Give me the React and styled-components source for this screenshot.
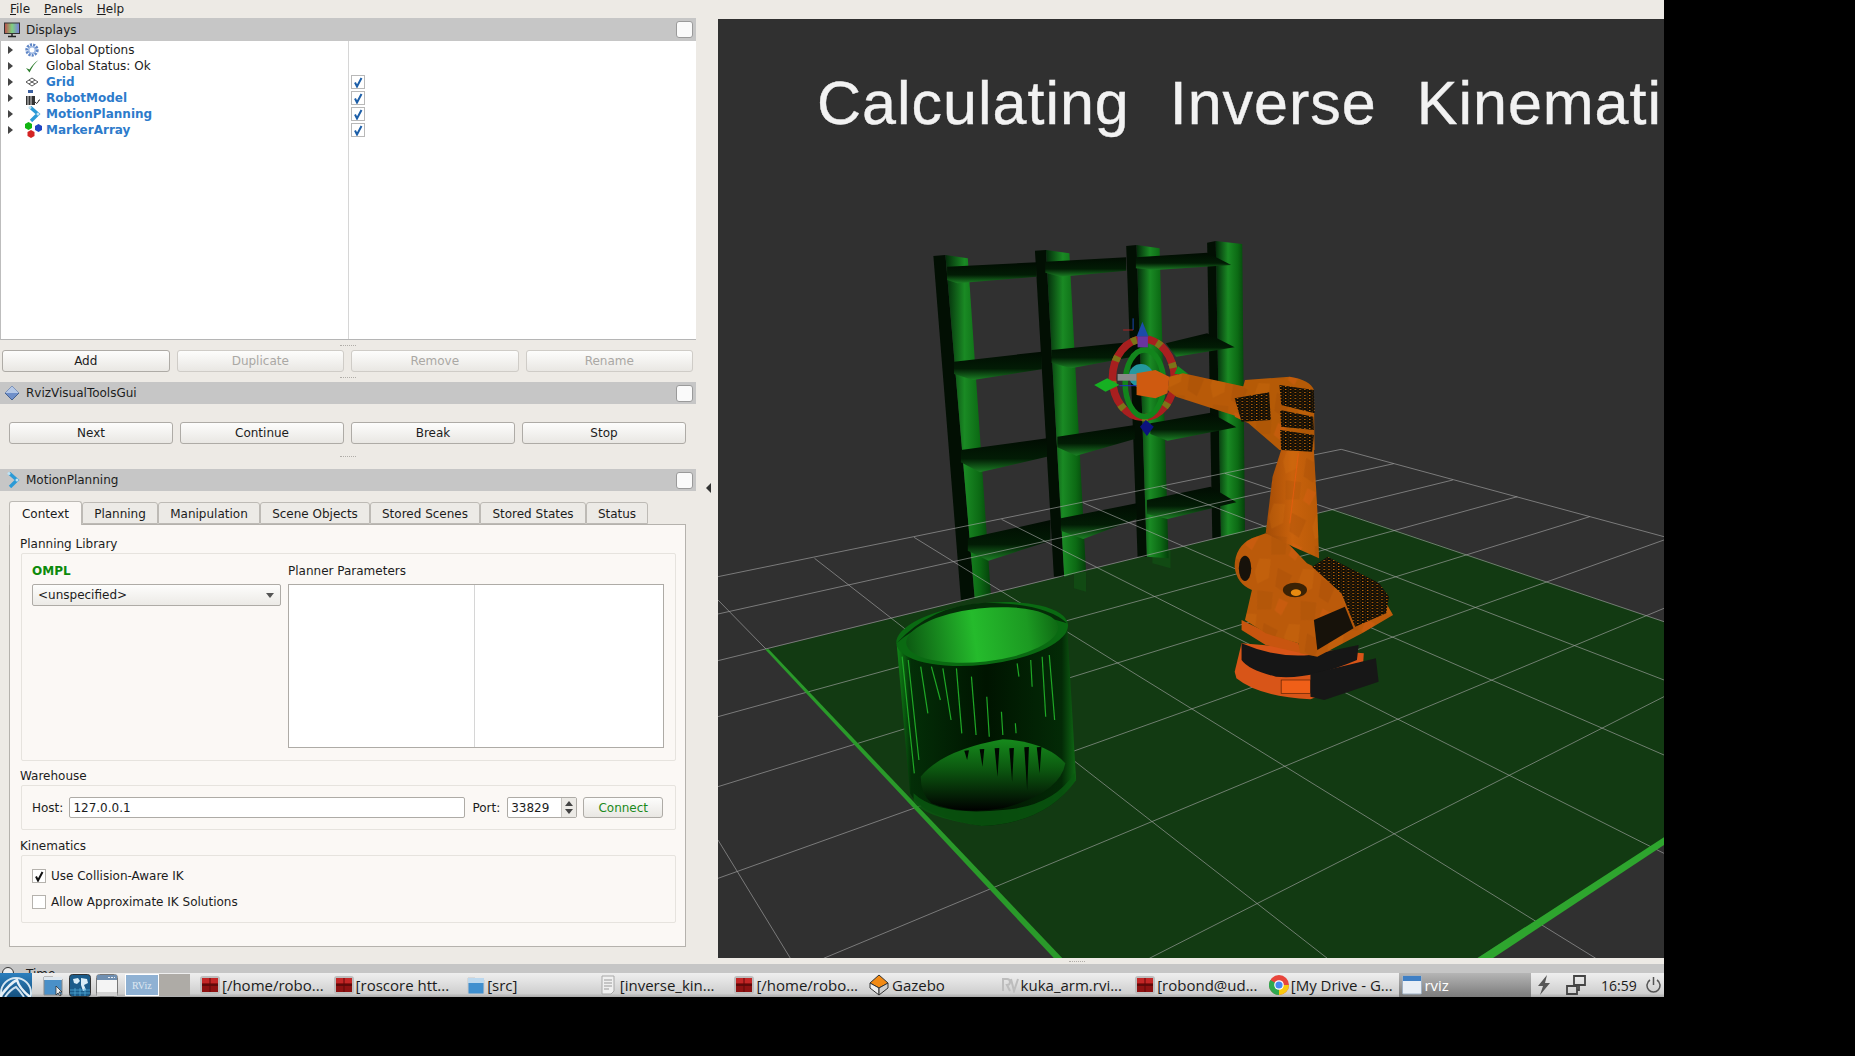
import styled, { createGlobalStyle } from "styled-components";

const Global = createGlobalStyle`
  html, body { margin: 0; padding: 0; background: #000; }
  body { font-family: "DejaVu Sans", sans-serif; font-size: 12px; color: #1c1c1c; overflow: hidden; }
`;

const Screen = styled.div`
  width: 1664px;
  height: 997px;
  display: flex;
  flex-direction: column;
  background: #edeae5;
  overflow: hidden;
`;

const MenuBar = styled.div`
  height: 18px;
  box-sizing: border-box;
  display: flex;
  align-items: center;
  padding: 0 0 1px 10px;
  gap: 14px;
  flex: none;
`;

const Main = styled.div`
  height: 940px;
  flex: none;
  display: flex;
`;

const Dock = styled.div`
  width: 696px;
  flex: none;
  display: flex;
  flex-direction: column;
`;

const Header = styled.div`
  height: ${(p) => p.h || 22}px;
  flex: none;
  background: #c6c6c6;
  display: flex;
  align-items: center;
  gap: 6px;
  padding: 0 3px 0 4px;
`;

const HeaderText = styled.span`
  flex: 1;
`;

const FloatBox = styled.span`
  width: 15px;
  height: 15px;
  border: 1px solid #9a9a9a;
  border-radius: 3px;
  background: #fafafa;
`;

const Tree = styled.div`
  height: 299px;
  flex: none;
  background: #fff;
  border-left: 1px solid #bdbdbd;
  border-bottom: 1px solid #b5b5b5;
  box-sizing: border-box;
  display: flex;
`;

const TreeNames = styled.div`
  width: 347px;
  padding-top: 1px;
  border-right: 1px solid #d6d6d6;
`;

const TreeRow = styled.div`
  height: 16px;
  display: flex;
  align-items: center;
  color: ${(p) => (p.$on ? "#2d7bcb" : "#1c1c1c")};
  font-weight: ${(p) => (p.$on ? 700 : 400)};
`;

const Arrow = styled.i`
  width: 0;
  height: 0;
  margin: 0 12px 0 7px;
  border-left: 5px solid #444;
  border-top: 4px solid transparent;
  border-bottom: 4px solid transparent;
`;

const TreeIcon = styled.span`
  width: 21px;
  height: 16px;
  display: flex;
  align-items: center;
  justify-content: flex-start;
`;

const TreeChecks = styled.div`
  padding: 33px 0 0 2px;
`;

const CheckCell = styled.div`
  height: 16px;
  display: flex;
  align-items: center;
`;

const BlueBox = styled.span`
  width: 12px;
  height: 12px;
  border: 1px solid #b8b8b8;
  background: #fff;
  display: flex;
  align-items: center;
  justify-content: center;
`;

const Dots = styled.div`
  height: ${(p) => p.h}px;
  flex: none;
  display: flex;
  align-items: center;
  justify-content: center;
  &::after {
    content: "";
    width: 16px;
    border-top: 1px dotted #b0ada8;
  }
`;

const ButtonRow = styled.div`
  display: flex;
  flex: none;
  gap: ${(p) => p.gap}px;
  padding: ${(p) => p.pad};
`;

const Btn = styled.div`
  flex: 1;
  height: 22px;
  box-sizing: border-box;
  display: flex;
  align-items: center;
  justify-content: center;
  border: 1px solid ${(p) => (p.$off ? "#cfccc7" : "#aeaba6")};
  border-radius: 3px;
  background: linear-gradient(#fdfdfc, #e9e7e3);
  color: ${(p) => (p.$off ? "#aaa8a4" : "#1c1c1c")};
`;

const TabRow = styled.div`
  height: 22px;
  flex: none;
  margin: 11px 0 0 9px;
  display: flex;
  align-items: flex-end;
  position: relative;
  z-index: 1;
`;

const Tab = styled.div`
  width: ${(p) => p.w}px;
  height: ${(p) => (p.$active ? 24 : 22)}px;
  margin-bottom: ${(p) => (p.$active ? -1 : 0)}px;
  padding-top: 1px;
  box-sizing: border-box;
  display: flex;
  align-items: center;
  justify-content: center;
  border: 1px solid #bdbab5;
  border-bottom: ${(p) => (p.$active ? "none" : "1px solid #bdbab5")};
  border-radius: 3px 3px 0 0;
  background: ${(p) => (p.$active ? "#fbf8f5" : "#eceae6")};
`;

const Pane = styled.div`
  height: 423px;
  width: 677px;
  flex: none;
  margin-left: 9px;
  box-sizing: border-box;
  background: #fbf8f5;
  border: 1px solid #b5b2ad;
  padding: 0 9px 0 10px;
`;

const GroupTitle = styled.div`
  height: ${(p) => p.h}px;
  box-sizing: border-box;
  display: flex;
  align-items: flex-end;
  padding-bottom: 2px;
`;

const GroupBox = styled.div`
  height: ${(p) => p.h}px;
  margin-left: 1px;
  box-sizing: border-box;
  border: 1px solid #e6e3de;
  border-radius: 2px;
  padding: ${(p) => p.pad};
`;

const LibraryGrid = styled.div`
  display: grid;
  grid-template-columns: 249px 376px;
  column-gap: 7px;
`;

const Green = styled.div`
  height: 27px;
  display: flex;
  align-items: center;
  color: #0c8a0c;
  font-weight: 700;
`;

const Plain = styled.div`
  height: 27px;
  display: flex;
  align-items: center;
`;

const Combo = styled.div`
  height: 22px;
  box-sizing: border-box;
  border: 1px solid #aeaba6;
  border-radius: 2px;
  background: linear-gradient(#fdfdfc, #eceae6);
  display: flex;
  align-items: center;
  justify-content: space-between;
  padding: 0 6px 0 5px;
  &::after {
    content: "";
    border-top: 5px solid #555;
    border-left: 4px solid transparent;
    border-right: 4px solid transparent;
  }
`;

const ParamTable = styled.div`
  height: 164px;
  box-sizing: border-box;
  border: 1px solid #aeaba6;
  background: #fff;
  display: grid;
  grid-template-columns: 186px 1fr;
  & > div:first-child { border-right: 1px solid #d6d6d6; }
`;

const FormRow = styled.div`
  display: flex;
  align-items: center;
  height: 21px;
`;

const PortLabel = styled.span`
  margin: 0 7px;
`;

const Field = styled.div`
  height: 21px;
  width: ${(p) => p.w}px;
  margin-left: ${(p) => p.$ml || 0}px;
  box-sizing: border-box;
  border: 1px solid #aeaba6;
  border-radius: 2px;
  background: #fff;
  display: flex;
  align-items: center;
  padding-left: 3px;
`;

const Spin = styled.div`
  width: 14px;
  height: 19px;
  margin-left: auto;
  border-left: 1px solid #c8c5c0;
  background: #eceae6;
  display: flex;
  flex-direction: column;
  align-items: center;
  justify-content: space-evenly;
`;

const SpinUp = styled.i`
  border-bottom: 5px solid #444;
  border-left: 4px solid transparent;
  border-right: 4px solid transparent;
`;

const SpinDown = styled.i`
  border-top: 5px solid #444;
  border-left: 4px solid transparent;
  border-right: 4px solid transparent;
`;

const ConnectBtn = styled(Btn)`
  flex: none;
  width: 80px;
  height: 21px;
  margin-left: 6px;
  color: #1b8a1b;
`;

const CheckLine = styled.div`
  display: flex;
  align-items: center;
  gap: 5px;
  height: 14px;
  margin-bottom: 12px;
`;

const Tick = styled.span`
  width: 12px;
  height: 12px;
  border: 1px solid #b5b2ad;
  background: #fff;
  display: flex;
  align-items: center;
  justify-content: center;
`;

const Gutter = styled.div`
  width: 22px;
  flex: none;
  display: flex;
  align-items: center;
  padding-left: 10px;
  box-sizing: border-box;
  &::after {
    content: "";
    border-right: 5px solid #333;
    border-top: 5px solid transparent;
    border-bottom: 5px solid transparent;
  }
`;

const Viewport = styled.div`
  width: 946px;
  height: 939px;
  margin-top: 1px;
  flex: none;
  position: relative;
  overflow: hidden;
  background: #303030;
  svg { display: block; margin-top: -1px; }
`;

const Caption = styled.div`
  position: absolute;
  left: 99px;
  top: 49px;
  white-space: nowrap;
  font-family: "Liberation Sans", Arial, sans-serif;
  font-size: 61px;
  line-height: 70px;
  letter-spacing: 1px;
  word-spacing: 22px;
  color: #f2f2f2;
  -webkit-text-stroke: 0.4px #f2f2f2;
  filter: blur(0.6px);
`;

const BottomDots = styled(Dots)`
  padding-left: 490px;
`;

const TimeStrip = styled.div`
  height: 9px;
  box-sizing: border-box;
  flex: none;
  background: #c6c6c6;
  overflow: hidden;
  display: flex;
  gap: 12px;
  padding: 3px 0 0 2px;
  line-height: 14px;
`;

const TimeDial = styled.i`
  width: 10px;
  height: 10px;
  flex: none;
  border: 1px solid #333;
  border-radius: 50%;
  background: #eee;
`;

const Taskbar = styled.div`
  height: 24px;
  flex: none;
  display: flex;
  align-items: stretch;
  background: linear-gradient(#efefef, #cfcfcf 85%, #a9a9a9);
  font-family: "Open Sans", "Noto Sans", sans-serif;
  font-size: 15px;
  color: #1b1b1b;
`;

const StartBtn = styled.div`
  width: 32px;
  flex: none;
  background: linear-gradient(#2c7fbe, #16517f);
  overflow: hidden;
`;

const Launchers = styled.div`
  width: 93px;
  flex: none;
  display: flex;
  align-items: center;
  gap: 5px;
  padding-left: 10px;
  box-sizing: border-box;
`;

const Pager = styled.div`
  width: 65px;
  flex: none;
  display: flex;
  margin: 1px 0;
`;

const Desk = styled.div`
  flex: 1;
  box-sizing: border-box;
  background: ${(p) => (p.$on ? "#8fb1d3" : "#aeaba6")};
  border: ${(p) => (p.$on ? "1px solid #fff" : "none")};
  color: #dfe8f1;
  font-family: "Liberation Serif", serif;
  font-size: 10px;
  display: flex;
  align-items: center;
  justify-content: center;
`;

const Tasks = styled.div`
  width: 1336px;
  margin-left: 7px;
  flex: none;
  display: grid;
  grid-template-columns: repeat(10, 1fr);
`;

const Task = styled.div`
  display: flex;
  align-items: center;
  gap: 2px;
  padding-left: 3px;
  overflow: hidden;
  white-space: nowrap;
  ${(p) =>
    p.$on &&
    `background: linear-gradient(#b5b5b5, #7b7b7b); color: #fff; width: 129px;`}
`;

const Tray = styled.div`
  flex: 1;
  display: flex;
  align-items: center;
  gap: 14px;
  font-size: 14px;
  padding-left: 4px;
`;

const Clock = styled.span`
  margin-right: -5px;
`;

const TickMark = ({ color }) => (
  <svg width="10" height="11" viewBox="0 0 10 11">
    <path d="M2 5.500 4 9.500 8.500 1" fill="none" stroke={color} strokeWidth="2" />
  </svg>
);

const TermIcon = () => (
  <svg width="20" height="18" viewBox="0 0 20 18">
    <rect x="0" y="0" width="20" height="18" rx="3" fill="#bdbdbd" />
    <rect x="2" y="2" width="16" height="14" fill="#8e1111" />
    <rect x="2" y="2" width="16" height="5" fill="#c42626" />
    <rect x="2" y="8.5" width="16" height="1" fill="#330404" />
    <rect x="9.5" y="2" width="1" height="14" fill="#5e0808" />
  </svg>
);

const FolderIcon = () => (
  <svg width="18" height="20" viewBox="0 0 18 20">
    <path d="M1 3h7l2 2h7v14H1z" fill="#3f8fcf" stroke="#c9c9c9" />
    <rect x="1" y="3" width="16" height="5" fill="#bcd8ee" />
  </svg>
);

const DocIcon = () => (
  <svg width="17" height="20" viewBox="0 0 17 20">
    <path d="M1 1h12v15l-3 3H1z" fill="#f0f0f0" stroke="#a8a8a8" />
    <path d="M3 5h8M3 8h8M3 11h8M3 14h5" stroke="#9a9a9a" />
  </svg>
);

const GazeboIcon = () => (
  <svg width="22" height="22" viewBox="0 0 22 22">
    <path d="M11 1 20 9 11 14 2 9z" fill="#f28a14" stroke="#333" />
    <path d="M2 9v5l9 7V14z" fill="#eee" stroke="#333" />
    <path d="M20 9v5l-9 7V14z" fill="#cfcfcf" stroke="#333" />
  </svg>
);

const ChromeIcon = () => (
  <svg width="20" height="20" viewBox="0 0 20 20">
    <circle cx="10" cy="10" r="10" fill="#e8453c" />
    <path d="M10 10 1.300 5A10 10 0 0 0 10 20z" fill="#2fa84f" />
    <path d="M10 10h10A10 10 0 0 1 10 20z" fill="#f9c80e" />
    <circle cx="10" cy="10" r="4.800" fill="#fff" />
    <circle cx="10" cy="10" r="3.600" fill="#4688f1" />
  </svg>
);

const RvizMark = () => (
  <svg width="17" height="16" viewBox="0 0 17 16">
    <path d="M1 14V2h4q3 0 3 3t-3 3l3 6M9 2l3 12 4-12" fill="none" stroke="#bdbdbd" strokeWidth="2" />
  </svg>
);

const WinIcon = () => (
  <svg width="20" height="20" viewBox="0 0 20 20">
    <rect x="0.5" y="1" width="19" height="18" rx="1" fill="#e8eef5" stroke="#9fb0c2" />
    <rect x="1" y="1" width="18" height="5" fill="#3f7fc4" />
  </svg>
);

const Lubuntu = () => (
  <svg width="32" height="24" viewBox="0 0 32 24">
    <circle cx="16" cy="20" r="15" fill="none" stroke="#d7e7f2" strokeWidth="2" />
    <path d="M0 24Q10 10 17 7q2 8 13 17" fill="none" stroke="#e6f0f7" strokeWidth="2.500" />
    <path d="M5 24q6-8 11-10 4 4 8 10" fill="none" stroke="#cfe1ee" strokeWidth="2" />
  </svg>
);

const Launcher1 = () => (
  <svg width="22" height="23" viewBox="0 0 22 23">
    <path d="M2 3h9l2 2h7v16H2z" fill="#4a90c8" stroke="#888" />
    <rect x="2" y="3" width="18" height="3" fill="#dfe7ee" />
    <path d="M14 12v9l2-2 2 3 1-1-2-3h3z" fill="#eee" stroke="#222" strokeWidth="0.7" />
  </svg>
);

const Launcher2 = () => (
  <svg width="22" height="23" viewBox="0 0 22 23">
    <rect x="0.5" y="0.5" width="21" height="22" rx="3" fill="#1b5c8b" stroke="#333" />
    <path d="M4 5l5-1 2 3-3 3-3-1zM12 4l6 1 1 4-4 2 2 5-3 1-2-6z" fill="#d9ecf7" />
    <path d="M1 16h20M1 19h20M6 14v8M11 14v8M16 14v8" stroke="#56b1df" strokeWidth="0.7" />
  </svg>
);

const Launcher3 = () => (
  <svg width="22" height="23" viewBox="0 0 22 23">
    <rect x="0.5" y="0.5" width="21" height="22" rx="3" fill="#f4f4f4" stroke="#777" />
    <rect x="1" y="1" width="20" height="5" fill="#6f8fb1" />
    <path d="M12 3.500h7" stroke="#e8eef5" strokeDasharray="2 1" />
    <rect x="1" y="18" width="20" height="4" fill="#d2d2d2" />
  </svg>
);

const MonitorIcon = () => (
  <svg width="16" height="16" viewBox="0 0 16 16">
    <defs>
      <linearGradient id="mon" x1="0" x2="1" y1="0" y2="0">
        <stop offset="0" stopColor="#c04a4a" />
        <stop offset="0.5" stopColor="#7fd07f" />
        <stop offset="1" stopColor="#7a7ae0" />
      </linearGradient>
    </defs>
    <rect x="0.5" y="1" width="15" height="10.500" fill="url(#mon)" stroke="#333" />
    <path d="M8 12v2M4 14.500h8" stroke="#222" strokeWidth="1.500" />
  </svg>
);

const GearIcon = () => (
  <svg width="14" height="14" viewBox="0 0 14 14">
    <circle cx="7" cy="7" r="5" fill="none" stroke="#5f86c6" strokeWidth="3.400" strokeDasharray="2 1" />
    <circle cx="7" cy="7" r="3.200" fill="none" stroke="#9db8e4" strokeWidth="1.400" />
    <circle cx="7" cy="7" r="1.600" fill="#fff" />
  </svg>
);

const CheckIcon = () => (
  <svg width="14" height="14" viewBox="0 0 14 14">
    <path d="M1 9l3.500 4.500C7 8 10 4 13.500 1 9.500 3.500 6.500 7 4.500 10.500z" fill="#2c7d2c" />
  </svg>
);

const GridIcon = () => (
  <svg width="14" height="10" viewBox="0 0 14 10">
    <path d="M7 1 13 5 7 9 1 5zM4 3l6 4M10 3 4 7" fill="none" stroke="#444" strokeWidth="0.9" />
  </svg>
);

const RobotIcon = () => (
  <svg width="16" height="16" viewBox="0 0 16 16">
    <rect x="3" y="0" width="5" height="3" fill="#3a5fa0" />
    <rect x="1" y="6" width="9" height="9" fill="#333" />
    <path d="M3 6v9M6 6v9" stroke="#ddd" />
    <path d="M10 12q2 3 3 0t2-2" fill="none" stroke="#333" />
  </svg>
);

const MotionIcon = () => (
  <svg width="16" height="16" viewBox="0 0 16 16">
    <path d="M5 1 13 8 6 15" fill="none" stroke="#2b9ad6" strokeWidth="3.400" />
    <circle cx="5" cy="1.500" r="1.500" fill="#bfe3f5" />
    <circle cx="13" cy="8" r="1.500" fill="#bfe3f5" />
  </svg>
);

const CubesIcon = () => (
  <svg width="18" height="16" viewBox="0 0 18 16">
    <path d="M3.500 0 7 2v4L3.500 8 0 6V2z" fill="#11b511" />
    <path d="M13.500 2 17 4v4l-3.500 2L10 8V4z" fill="#1f45c4" />
    <path d="M6 8l3.500 2v4L6 16l-3.500-2v-4z" fill="#d42424" />
  </svg>
);

const DiamondIcon = () => (
  <svg width="16" height="16" viewBox="0 0 16 16">
    <path d="M8 1 15 8 8 15 1 8z" fill="#6f8fc9" stroke="#46618f" />
    <path d="M8 1 15 8H1z" fill="#b5c8e6" />
  </svg>
);

const GRID = [
  [0, 410, 1033, 28], [0, 522, 1120, 71], [0, 662, 1218, 120], [0, 830, 1325, 170],
  [0, 1040, 1445, 230], [0, 1315, 1568, 300], [175, 1555, 1568, 505], [715, 1555, 1568, 770],
  [0, 1200, 120, 1555], [0, 480, 80, 628], [160, 355, 1010, 1555], [325, 292, 1455, 1555],
  [470, 238, 1568, 1240], [605, 188, 1568, 945], [735, 140, 1568, 720], [840, 100, 1568, 545],
  [1033, 28, 1568, 290],
];

const POSTS = [
  ["155,78 190,75 275,1105 235,1110", "190,75 255,85 322,1095 275,1105"],
  ["450,62 482,60 535,1040 505,1040", "482,60 550,70 598,1020 535,1040"],
  ["715,48 745,45 775,980 748,980", "745,45 812,55 838,985 775,980"],
  ["950,38 975,33 990,920 965,925", "975,33 1052,42 1060,905 990,920"],
];

const SHELVES = [
  "195,110 455,97 455,140 225,160 195,150", "480,95 715,82 715,122 525,140 480,128", "743,82 950,68 1020,105 800,120 743,115",
  "215,395 470,365 470,418 270,450 215,432", "498,360 735,335 735,380 555,415 498,398", "830,340 950,310 1030,352 860,380",
  "235,660 485,625 485,680 290,727 235,697", "515,620 740,585 740,627 570,677 515,652", "785,580 960,548 1035,592 835,632 785,612",
  "255,925 495,870 495,932 315,992 255,962", "525,865 745,820 745,867 590,927 525,902", "775,810 960,770 1035,817 835,867 775,852",
];

const STREAKS = [
  [200, 320, 225, 420], [232, 325, 255, 480], [270, 325, 285, 520], [312, 350, 325, 525],
  [355, 410, 362, 530], [396, 455, 400, 525], [435, 490, 437, 520], [478, 300, 482, 380],
  [510, 290, 520, 470], [530, 285, 545, 480], [440, 310, 445, 350], [118, 290, 152, 640],
  [135, 300, 165, 600], [170, 320, 190, 460],
];

const WEDGES = [[292, 572, 600], [335, 568, 620], [377, 565, 650], [418, 565, 665], [460, 562, 690], [495, 562, 640]];

const TURRET = "M1030,1010 Q1030,950 1080,925 L1120,910 Q1160,920 1180,935 L1240,1000 L1260,1010 L1340,1090 L1470,1120 L1490,1155 L1400,1210 L1270,1280 L1220,1270 L1215,1240 L1120,1210 L1060,1170 L1080,1080 Q1035,1060 1030,1010Z";
const UPPER_ARM = "M1120,910 L1140,740 L1165,660 L1260,660 L1270,840 L1275,985 L1200,950Z";
const SHOULDER = "M1060,450 L1190,440 Q1250,450 1260,480 L1262,660 L1160,660 L1070,580 L1030,560Z";
const FOREARM = "M840,440 L880,430 L1060,470 L1040,560 L860,500 L835,480Z";

const Part = ({ d, fill }) => (
  <>
    <path d={d} fill={fill} />
    <path d={d} fill="url(#mottle)" />
  </>
);

const Scene = () => (
  <svg width="946" height="940" viewBox="718 18 946 940">
    <defs>
      <linearGradient id="postFace" x1="0" x2="1" y1="0" y2="0">
        <stop offset="0" stopColor="#03280a" />
        <stop offset="0.42" stopColor="#1a8a24" />
        <stop offset="0.75" stopColor="#0c6a14" />
        <stop offset="1" stopColor="#04400a" />
      </linearGradient>
      <linearGradient id="shelf" x1="0" x2="0" y1="0" y2="1">
        <stop offset="0" stopColor="#010c02" />
        <stop offset="0.6" stopColor="#021c05" />
        <stop offset="1" stopColor="#1b8024" />
      </linearGradient>
      <linearGradient id="mouth" x1="0" x2="1" y1="0" y2="0">
        <stop offset="0" stopColor="#0c5a12" />
        <stop offset="0.45" stopColor="#25bb2c" />
        <stop offset="0.8" stopColor="#1c9a22" />
        <stop offset="1" stopColor="#0f6a14" />
      </linearGradient>
      <linearGradient id="canBody" x1="0" x2="1" y1="0" y2="0">
        <stop offset="0" stopColor="#118a18" />
        <stop offset="0.08" stopColor="#032e07" />
        <stop offset="0.5" stopColor="#001400" />
        <stop offset="0.92" stopColor="#032a06" />
        <stop offset="1" stopColor="#0f6a14" />
      </linearGradient>
      <linearGradient id="canFloor" x1="0" x2="0" y1="0" y2="1">
        <stop offset="0" stopColor="#168a1c" />
        <stop offset="0.4" stopColor="#0c5a10" />
        <stop offset="1" stopColor="#000" />
      </linearGradient>
      <linearGradient id="arm" x1="0" x2="1" y1="0" y2="0">
        <stop offset="0" stopColor="#a34c06" />
        <stop offset="0.5" stopColor="#c9620c" />
        <stop offset="1" stopColor="#b85a08" />
      </linearGradient>
      <pattern id="dither" width="14" height="9" patternUnits="userSpaceOnUse">
        <rect width="14" height="9" fill="#120e06" />
        <rect x="0" y="0" width="4" height="3" fill="#c76a08" />
        <rect x="8" y="5" width="3" height="2" fill="#8a4a05" />
      </pattern>
      <pattern id="mottle" width="130" height="170" patternUnits="userSpaceOnUse" patternTransform="rotate(14)">
        <polygon points="8,10 40,4 48,60 20,84 4,50" fill="#dc7410" opacity="0.22" />
        <polygon points="66,24 112,36 104,92 72,80" fill="#8f4205" opacity="0.2" />
        <polygon points="24,104 70,98 78,150 38,160" fill="#8f4205" opacity="0.16" />
        <polygon points="92,112 120,118 110,160 88,150" fill="#e8601a" opacity="0.28" />
      </pattern>
    </defs>

    <g transform="translate(718 440) scale(0.6033 0.33333)">
      <polygon points="80,628 1020,208 1568,545 1568,1195 1258,1555 565,1555" fill="#123a12" />
      <polygon points="590,400 610,395 610,455 590,445" fill="#0f5a14" opacity="0.5" />
      <polygon points="720,340 750,330 750,385 720,370" fill="#0f5a14" opacity="0.5" />
    </g>

    <g transform="translate(880 230) scale(0.34435 0.33333)">
      {POSTS.map(([dark, face], i) => (
        <g key={i}>
          <polygon points={dark} fill="#020f03" />
          <polygon points={face} fill="url(#postFace)" />
        </g>
      ))}
      {SHELVES.map((s) => (
        <polygon key={s} points={s} fill="url(#shelf)" />
      ))}
    </g>

    <g transform="translate(718 440) scale(0.6033 0.33333)">
      {GRID.map(([x1, y1, x2, y2]) => (
        <line key={`${x1}-${y1}`} x1={x1} y1={y1} x2={x2} y2={y2} stroke="#a8a8a8" strokeOpacity="0.62" strokeWidth="1" vectorEffect="non-scaling-stroke" />
      ))}
      <polygon points="78,628 84,628 571,1555 557,1555" fill="#2a9a2a" />
      <polygon points="1258,1555 1568,1192 1568,1215 1284,1555" fill="#2ea52e" />
    </g>

    <g transform="translate(860 560) scale(0.35714 0.33333)">
      <path d="M103,255 L140,700 Q170,770 340,798 Q520,790 605,660 L580,195 Z" fill="url(#canBody)" />
      <path d="M170,650 Q230,570 400,538 Q520,545 575,610 Q560,700 400,745 Q280,765 200,730 Q170,700 170,650Z" fill="url(#canFloor)" />
      {WEDGES.map(([x, top, bottom]) => (
        <polygon key={x} points={`${x},${top} ${x + 13},${top - 1} ${x + 8},${bottom}`} fill="#010801" />
      ))}
      {STREAKS.map(([x1, y1, x2, y2]) => (
        <line key={`${x1}-${y1}`} x1={x1} y1={y1} x2={x2} y2={y2} stroke="#1fa826" strokeWidth="1.200" vectorEffect="non-scaling-stroke" />
      ))}
      <path d="M150,722 Q170,770 340,798 Q520,790 605,660 L600,640 Q540,740 400,750 Q220,770 150,700Z" fill="#0a5a10" opacity="0.8" />
      <ellipse cx="342" cy="222" rx="242" ry="92" transform="rotate(-7 342 222)" fill="#0a6a12" />
      <path d="M102,250 Q200,135 350,128 Q520,130 580,190 Q500,160 350,150 Q190,165 102,250Z" fill="#052d08" />
      <ellipse cx="342" cy="225" rx="214" ry="80" transform="rotate(-7 342 225)" fill="url(#mouth)" />
    </g>

    <g transform="translate(880 230) scale(0.34435 0.33333)">
      <ellipse cx="765" cy="445" rx="90" ry="118" fill="none" stroke="#a81f1f" strokeWidth="22" />
      <ellipse cx="765" cy="445" rx="90" ry="118" fill="none" stroke="#7c7418" strokeWidth="22" strokeDasharray="16 60" />
      <ellipse cx="768" cy="460" rx="56" ry="100" fill="none" stroke="#12851c" strokeWidth="16" />
      <polygon points="762,275 745,320 780,320" fill="#1c4ba8" />
      <polygon points="748,320 778,320 778,352 748,352" fill="#6a35a0" />
      <polygon points="772,570 755,590 775,618 795,590" fill="#0c127e" />
      <polygon points="622,465 660,445 695,465 655,485" fill="#16b022" />
      <polygon points="865,408 895,432 855,432" fill="#14901e" />
      <circle cx="758" cy="437" r="35" fill="#2498a0" />
      <rect x="690" y="432" width="55" height="20" fill="#8a8a8a" />
      <line x1="735" y1="265" x2="735" y2="300" stroke="#2050d0" strokeWidth="2.500" />
      <line x1="706" y1="300" x2="735" y2="300" stroke="#c02020" strokeWidth="2.500" />
      <line x1="695" y1="467" x2="778" y2="467" stroke="#2030c0" strokeWidth="3" />

      <path d="M1030,1325 L1050,1240 L1405,1270 L1400,1350 L1250,1408 Q1100,1400 1035,1345Z" fill="#d85518" />
      <path d="M1050,1240 Q1150,1285 1250,1275 L1390,1245 L1385,1290 Q1250,1350 1150,1340 Q1070,1320 1050,1290Z" fill="#161616" />
      <rect x="1165" y="1350" width="85" height="40" fill="#ef5f18" stroke="#5a2205" strokeWidth="2" />
      <polygon points="1250,1332 1440,1285 1448,1355 1290,1410 1250,1400" fill="#171717" />
      <polygon points="1050,1170 1120,1205 1215,1240 1225,1270 1120,1245 1050,1200" fill="#c8550f" />
      <Part d={TURRET} fill="#bb5a0a" />
      <Part d={UPPER_ARM} fill="url(#arm)" />
      <line x1="1215" y1="670" x2="1190" y2="880" stroke="#ee5a10" strokeWidth="2" />
      <Part d={SHOULDER} fill="#b55a06" />
      <Part d={FOREARM} fill="#b85a08" />
      <polygon points="745,430 800,420 840,440 835,490 800,505 745,495" fill="#cf5a10" />
      <polygon points="1030,505 1130,487 1135,570 1050,575" fill="url(#dither)" />
      <polygon points="1160,465 1260,480 1262,550 1165,525" fill="url(#dither)" />
      <polygon points="1162,540 1258,560 1260,600 1165,590" fill="url(#dither)" />
      <polygon points="1162,600 1260,615 1255,665 1165,660" fill="url(#dither)" />
      <polygon points="1255,1010 1300,980 1450,1060 1478,1100 1470,1150 1380,1190 1340,1090" fill="url(#dither)" />
      <polygon points="1260,1170 1350,1130 1375,1195 1270,1260" fill="#17120a" />
      <ellipse cx="1060" cy="1015" rx="18" ry="38" fill="#17120a" />
      <ellipse cx="1205" cy="1080" rx="35" ry="22" fill="#3a2205" />
      <ellipse cx="1208" cy="1088" rx="15" ry="10" fill="#e88a10" />
    </g>
  </svg>
);

const TREE = [
  { name: "Global Options", icon: <GearIcon /> },
  { name: "Global Status: Ok", icon: <CheckIcon /> },
  { name: "Grid", icon: <GridIcon />, on: true },
  { name: "RobotModel", icon: <RobotIcon />, on: true },
  { name: "MotionPlanning", icon: <MotionIcon />, on: true },
  { name: "MarkerArray", icon: <CubesIcon />, on: true },
];

const TABS = [
  ["Context", 73, true], ["Planning", 76], ["Manipulation", 102], ["Scene Objects", 110],
  ["Stored Scenes", 110], ["Stored States", 106], ["Status", 62],
];

const TASKS = [
  [<TermIcon key="i" />, "[/home/robo..."], [<TermIcon key="i" />, "[roscore htt..."], [<FolderIcon key="i" />, "[src]"],
  [<DocIcon key="i" />, "[inverse_kin..."], [<TermIcon key="i" />, "[/home/robo..."], [<GazeboIcon key="i" />, "Gazebo"],
  [<RvizMark key="i" />, "kuka_arm.rvi..."], [<TermIcon key="i" />, "[robond@ud..."], [<ChromeIcon key="i" />, "[My Drive - G..."],
];

const App = () => (
  <>
    <Global />
    <Screen>
      <MenuBar>
        <span><u>F</u>ile</span>
        <span><u>P</u>anels</span>
        <span><u>H</u>elp</span>
      </MenuBar>
      <Main>
        <Dock>
          <Header h={23}>
            <MonitorIcon />
            <HeaderText>Displays</HeaderText>
            <FloatBox />
          </Header>
          <Tree>
            <TreeNames>
              {TREE.map((row) => (
                <TreeRow key={row.name} $on={row.on}>
                  <Arrow />
                  <TreeIcon>{row.icon}</TreeIcon>
                  {row.name}
                </TreeRow>
              ))}
            </TreeNames>
            <TreeChecks>
              {[0, 1, 2, 3].map((i) => (
                <CheckCell key={i}><BlueBox><TickMark color="#1d5fa8" /></BlueBox></CheckCell>
              ))}
            </TreeChecks>
          </Tree>
          <Dots h={10} />
          <ButtonRow gap={7} pad="0 3px 0 2px">
            <Btn>Add</Btn>
            <Btn $off>Duplicate</Btn>
            <Btn $off>Remove</Btn>
            <Btn $off>Rename</Btn>
          </ButtonRow>
          <Dots h={10} />
          <Header>
            <DiamondIcon />
            <HeaderText>RvizVisualToolsGui</HeaderText>
            <FloatBox />
          </Header>
          <ButtonRow gap={7} pad="18px 10px 0 9px">
            <Btn>Next</Btn>
            <Btn>Continue</Btn>
            <Btn>Break</Btn>
            <Btn>Stop</Btn>
          </ButtonRow>
          <Dots h={25} />
          <Header>
            <MotionIcon />
            <HeaderText>MotionPlanning</HeaderText>
            <FloatBox />
          </Header>
          <TabRow>
            {TABS.map(([label, w, active]) => (
              <Tab key={label} w={w} $active={active}>{label}</Tab>
            ))}
          </TabRow>
          <Pane>
            <GroupTitle h={28}>Planning Library</GroupTitle>
            <GroupBox h={208} pad="3px 10px 0 10px">
              <LibraryGrid>
                <div>
                  <Green>OMPL</Green>
                  <Combo>&lt;unspecified&gt;</Combo>
                </div>
                <div>
                  <Plain>Planner Parameters</Plain>
                  <ParamTable><div /><div /></ParamTable>
                </div>
              </LibraryGrid>
            </GroupBox>
            <GroupTitle h={24}>Warehouse</GroupTitle>
            <GroupBox h={45} pad="11px 11px 0 10px">
              <FormRow>
                <span>Host:</span>
                <Field w={396} $ml={6}>127.0.0.1</Field>
                <PortLabel>Port:</PortLabel>
                <Field w={70}>
                  33829
                  <Spin><SpinUp /><SpinDown /></Spin>
                </Field>
                <ConnectBtn>Connect</ConnectBtn>
              </FormRow>
            </GroupBox>
            <GroupTitle h={25}>Kinematics</GroupTitle>
            <GroupBox h={68} pad="13px 10px 0 10px">
              <CheckLine><Tick><TickMark color="#111" /></Tick>Use Collision-Aware IK</CheckLine>
              <CheckLine><Tick />Allow Approximate IK Solutions</CheckLine>
            </GroupBox>
          </Pane>
        </Dock>
        <Gutter />
        <Viewport>
          <Scene />
          <Caption>Calculating Inverse Kinematics</Caption>
        </Viewport>
      </Main>
      <BottomDots h={6} />
      <TimeStrip><TimeDial />Time</TimeStrip>
      <Taskbar>
        <StartBtn><Lubuntu /></StartBtn>
        <Launchers><Launcher1 /><Launcher2 /><Launcher3 /></Launchers>
        <Pager>
          <Desk $on>RViz</Desk>
          <Desk />
        </Pager>
        <Tasks>
          {TASKS.map(([icon, label], i) => (
            <Task key={i}>{icon}{label}</Task>
          ))}
          <Task $on><WinIcon />rviz</Task>
        </Tasks>
        <Tray>
          <svg width="14" height="20" viewBox="0 0 14 20"><path d="M10 0 1 11h5l-3 9 10-12H8z" fill="#555" /></svg>
          <svg width="22" height="22" viewBox="0 0 22 22"><path d="M9 2h11v9H9zM2 12h10v8H2zM14 11v5h-2" fill="none" stroke="#444" strokeWidth="1.800" /></svg>
          <Clock>16:59</Clock>
          <svg width="15" height="18" viewBox="0 0 15 18"><path d="M4 4a6.500 6.500 0 1 0 7 0M7.500 1v8" fill="none" stroke="#555" strokeWidth="1.500" /></svg>
        </Tray>
      </Taskbar>
    </Screen>
  </>
);

export default App;
